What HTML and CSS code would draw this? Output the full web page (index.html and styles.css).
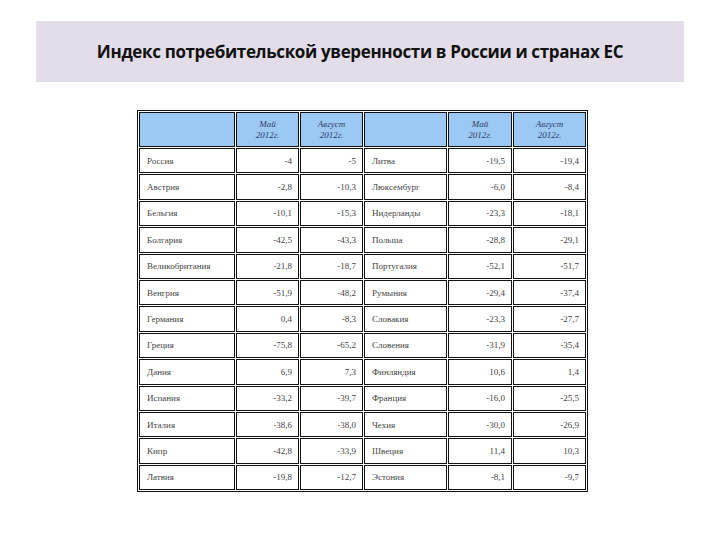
FILE: index.html
```html
<!DOCTYPE html>
<html lang="ru">
<head>
<meta charset="utf-8">
<title>Индекс потребительской уверенности</title>
<link rel="stylesheet" href="styles.css">
</head>
<body>
<div class="slide">
  <div class="title-bar">
    <h1 class="title">Индекс потребительской уверенности в России и странах ЕС</h1>
  </div>
  <table class="data">
    <colgroup>
      <col class="c-name1"><col class="c-num"><col class="c-num">
      <col class="c-name2"><col class="c-num2"><col class="c-num3">
    </colgroup>
    <thead>
      <tr>
        <th></th>
        <th>Май<br>2012г.</th>
        <th>Август<br>2012г.</th>
        <th></th>
        <th>Май<br>2012г.</th>
        <th>Август<br>2012г.</th>
      </tr>
    </thead>
    <tbody>
      <tr><td class="name">Россия</td><td>-4</td><td>-5</td><td class="name">Литва</td><td>-19,5</td><td>-19,4</td></tr>
      <tr><td class="name">Австрия</td><td>-2,8</td><td>-10,3</td><td class="name">Люксембург</td><td>-6,0</td><td>-8,4</td></tr>
      <tr><td class="name">Бельгия</td><td>-10,1</td><td>-15,3</td><td class="name">Нидерланды</td><td>-23,3</td><td>-18,1</td></tr>
      <tr><td class="name">Болгария</td><td>-42,5</td><td>-43,3</td><td class="name">Польша</td><td>-28,8</td><td>-29,1</td></tr>
      <tr><td class="name">Великобритания</td><td>-21,8</td><td>-18,7</td><td class="name">Португалия</td><td>-52,1</td><td>-51,7</td></tr>
      <tr><td class="name">Венгрия</td><td>-51,9</td><td>-48,2</td><td class="name">Румыния</td><td>-29,4</td><td>-37,4</td></tr>
      <tr><td class="name">Германия</td><td>0,4</td><td>-8,3</td><td class="name">Словакия</td><td>-23,3</td><td>-27,7</td></tr>
      <tr><td class="name">Греция</td><td>-75,8</td><td>-65,2</td><td class="name">Словения</td><td>-31,9</td><td>-35,4</td></tr>
      <tr><td class="name">Дания</td><td>6,9</td><td>7,3</td><td class="name">Финляндия</td><td>10,6</td><td>1,4</td></tr>
      <tr><td class="name">Испания</td><td>-33,2</td><td>-39,7</td><td class="name">Франция</td><td>-16,0</td><td>-25,5</td></tr>
      <tr><td class="name">Италия</td><td>-38,6</td><td>-38,0</td><td class="name">Чехия</td><td>-30,0</td><td>-26,9</td></tr>
      <tr><td class="name">Кипр</td><td>-42,8</td><td>-33,9</td><td class="name">Швеция</td><td>11,4</td><td>10,3</td></tr>
      <tr><td class="name">Латвия</td><td>-19,8</td><td>-12,7</td><td class="name">Эстония</td><td>-8,1</td><td>-9,7</td></tr>
    </tbody>
  </table>
</div>
</body>
</html>
```

FILE: styles.css
```css
html, body {
  margin: 0;
  padding: 0;
  background: #ffffff;
}

.slide {
  width: 720px;
  height: 540px;
  padding-top: 21px;
  box-sizing: border-box;
}

.title-bar {
  margin-left: 36px;
  width: 648px;
  height: 61px;
  background: #e2dde9;
  display: flex;
  align-items: center;
  justify-content: center;
}

.title {
  margin: 0;
  font-family: "Open Sans", "Liberation Sans", sans-serif;
  font-weight: 700;
  font-size: 17px;
  letter-spacing: -0.35px;
  color: #111111;
}

.data {
  margin: 28px 0 0 137px;
  width: 450px;
  table-layout: fixed;
  border-collapse: separate;
  border-spacing: 1px;
  border: 1px solid #111;
  font-family: "Liberation Serif", "DejaVu Serif", serif;
  font-size: 9px;
  color: #444;
}

.c-name1 { width: 96px; }
.c-num { width: 63px; }
.c-name2 { width: 83px; }
.c-num2 { width: 64px; }
.c-num3 { width: 73px; }

.data th,
.data td {
  border: 1px solid #111;
  padding: 0 6px;
}

.data th {
  height: 33px;
  background: #9cc9f3;
  font-weight: normal;
  font-style: italic;
  color: #2b3a68;
  line-height: 11px;
  text-align: center;
}

.data td {
  height: 23.4px;
  text-align: right;
  white-space: nowrap;
}

.data td.name {
  text-align: left;
  padding-left: 7px;
}
```
